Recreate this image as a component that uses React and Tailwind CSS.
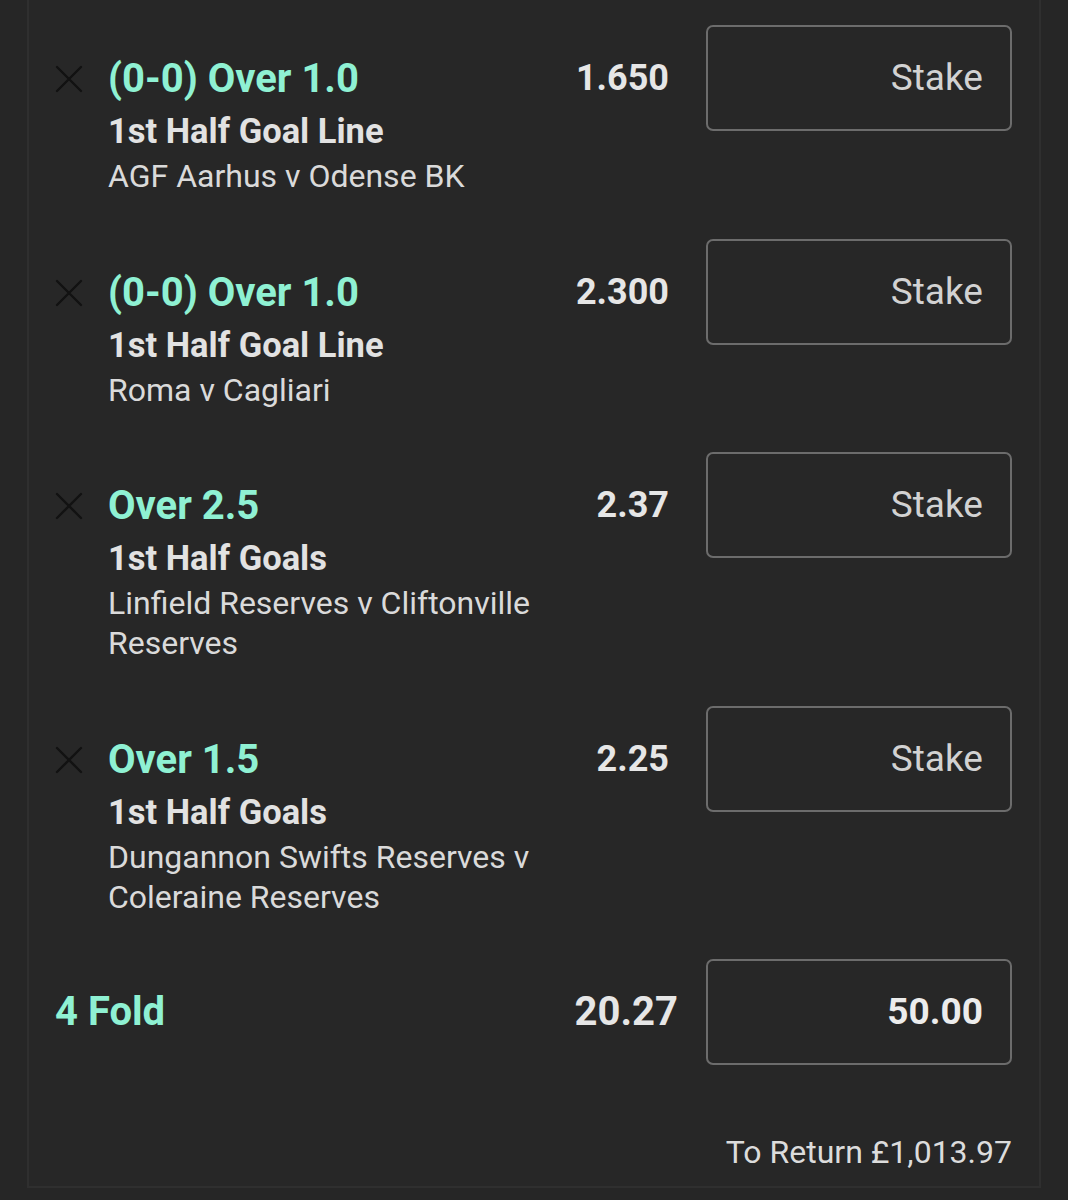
import React from "react";

const legs = [
  { sel: "(0-0) Over 1.0", market: "1st Half Goal Line", event: "AGF Aarhus v Odense BK", odds: "1.650" },
  { sel: "(0-0) Over 1.0", market: "1st Half Goal Line", event: "Roma v Cagliari", odds: "2.300" },
  { sel: "Over 2.5", market: "1st Half Goals", event: "Linfield Reserves v Cliftonville Reserves", odds: "2.37" },
  { sel: "Over 1.5", market: "1st Half Goals", event: "Dungannon Swifts Reserves v Coleraine Reserves", odds: "2.25" },
];

const CloseIcon = () => (
  <svg width="28" height="28" viewBox="0 0 28 28" fill="none">
    <path d="M2 2 L26 26 M26 2 L2 26" stroke="#121212" strokeWidth="2.4" strokeLinecap="round" />
  </svg>
);

const StakeBox = ({ children, filled }) => (
  <div className="w-[306px] h-[106px] shrink-0 rounded-[7px] border-2 border-[#6c6c6c] flex items-center justify-end pr-[27px]">
    <span className={filled ? "text-[37px] font-bold text-[#ececec]" : "text-[37px] text-[#d2d2d2]"}>{children}</span>
  </div>
);

const Leg = ({ leg }) => (
  <div className="flex items-start">
    <div className="w-[28px] pt-[40px] shrink-0">
      <CloseIcon />
    </div>
    <div className="flex-1 min-w-0 pl-[25px] pt-[27px] pb-[1px] pr-[10px]">
      <div className="text-[40px] leading-[54px] font-bold text-[#8ff1d3]">{leg.sel}</div>
      <div className="text-[34.5px] leading-[50px] font-bold text-[#e2e2e2]">{leg.market}</div>
      <div className="text-[32px] leading-[40px] text-[#dadada]">{leg.event}</div>
    </div>
    <div className="w-[112px] shrink-0 pt-[26px] text-right text-[36px] leading-[54px] font-bold text-[#e6e6e6]">
      {leg.odds}
    </div>
    <div className="w-[37px] shrink-0" />
    <StakeBox>Stake</StakeBox>
  </div>
);

export default function App() {
  return (
    <div className="min-h-[1200px] bg-[#262626] px-[27px]" style={{ fontFamily: "Roboto, 'Noto Sans', sans-serif" }}>
      <div className="bg-[#272727] border-2 border-t-0 border-[#2f2f2f] pt-[25px] pl-[26px] pr-[27px] pb-[14px]">
        <div className="flex flex-col gap-[41.5px]">
          {legs.map((leg, i) => (
            <Leg key={i} leg={leg} />
          ))}
          <div className="flex items-center">
            <div className="flex-1 text-[40px] font-bold text-[#8ff1d3]">4 Fold</div>
            <div className="text-[40px] font-bold text-[#e6e6e6] mr-[28px]">20.27</div>
            <StakeBox filled>50.00</StakeBox>
          </div>
        </div>
        <div className="mt-[67px] text-right text-[32px] leading-[40px] text-[#dcdcdc]">To Return £1,013.97</div>
      </div>
    </div>
  );
}
